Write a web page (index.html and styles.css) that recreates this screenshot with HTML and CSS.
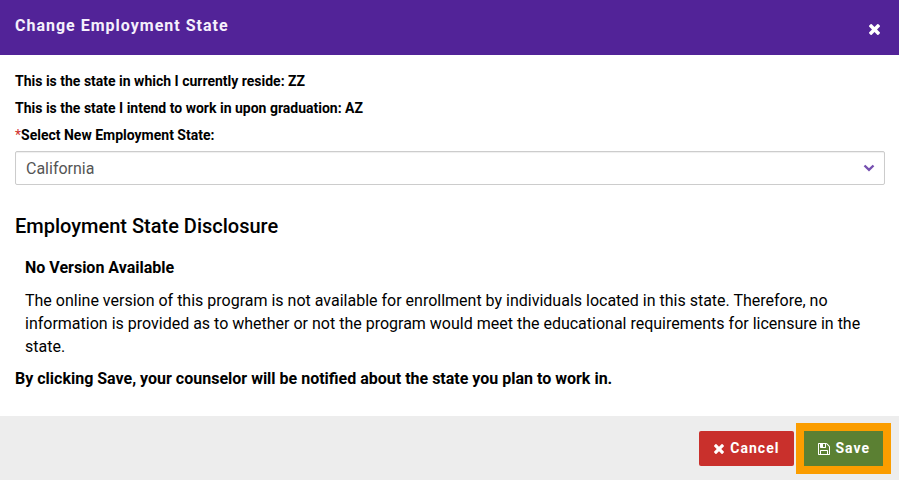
FILE: index.html
```html
<!DOCTYPE html>
<html lang="en">
<head>
<meta charset="utf-8">
<title>Change Employment State</title>
<link rel="stylesheet" href="styles.css">
</head>
<body>
<form class="modal">
  <header class="modal-header">
    <h1 class="modal-title">Change Employment State</h1>
    <button type="button" class="close" aria-label="Close">
      <svg class="icon-close" viewBox="302 366 1188 1188" aria-hidden="true"><path fill="currentColor" d="M1490 1322q0 40-28 68l-136 136q-28 28-68 28t-68-28l-294-294-294 294q-28 28-68 28t-68-28l-136-136q-28-28-28-68t28-68l294-294-294-294q-28-28-28-68t28-68l136-136q28-28 68-28t68 28l294 294 294-294q28-28 68-28t68 28l136 136q28 28 28 68t-28 68l-294 294 294 294q28 28 28 68z"/></svg>
    </button>
  </header>
  <main class="modal-body">
    <p class="fact">This is the state in which I currently reside: ZZ</p>
    <p class="fact">This is the state I intend to work in upon graduation: AZ</p>
    <label class="fact" for="state"><span class="required">*</span>Select New Employment State:</label>
    <div class="select-wrap">
      <select id="state" class="select"><option>California</option></select>
      <svg class="chevron" viewBox="0 0 12 8" aria-hidden="true"><path d="M1.500 1.500L6 5.800L10.500 1.500" fill="none" stroke="currentColor" stroke-width="2.400"/></svg>
    </div>
    <h2 class="heading">Employment State Disclosure</h2>
    <section class="disclosure">
      <h3 class="subheading">No Version Available</h3>
      <p class="text">The online version of this program is not available for enrollment by individuals located in this state. Therefore, no information is provided as to whether or not the program would meet the educational requirements for licensure in the state.</p>
    </section>
    <p class="notice">By clicking Save, your counselor will be notified about the state you plan to work in.</p>
  </main>
  <footer class="modal-footer">
    <button type="button" class="btn cancel">
      <svg class="icon-cancel" viewBox="302 366 1188 1188" aria-hidden="true"><path fill="currentColor" d="M1490 1322q0 40-28 68l-136 136q-28 28-68 28t-68-28l-294-294-294 294q-28 28-68 28t-68-28l-136-136q-28-28-28-68t28-68l294-294-294-294q-28-28-28-68t28-68l136-136q28-28 68-28t68 28l294 294 294-294q28-28 68-28t68 28l136 136q28 28 28 68t-28 68l-294 294 294 294q28 28 28 68z"/></svg>
      Cancel
    </button>
    <button type="submit" class="btn save">
      <svg class="icon-save" viewBox="128 128 1536 1536" aria-hidden="true"><path fill="currentColor" d="M512 1536h768v-384h-768v384zm896 0h128v-896q0-14-10-38.500t-20-34.500l-281-281q-10-10-34-20t-39-10v416q0 40-28 68t-68 28h-576q-40 0-68-28t-28-68v-416h-128v1280h128v-416q0-40 28-68t68-28h832q40 0 68 28t28 68v416zm-384-928v-320q0-13-9.500-22.500t-22.500-9.500h-192q-13 0-22.500 9.500t-9.500 22.500v320q0 13 9.500 22.500t22.500 9.500h192q13 0 22.500-9.500t9.500-22.500zm640 32v928q0 40-28 68t-68 28h-1344q-40 0-68-28t-28-68v-1344q0-40 28-68t68-28h928q40 0 88 20t76 48l280 280q28 28 48 76t20 88z"/></svg>
      Save
    </button>
  </footer>
</form>
</body>
</html>
```
FILE: styles.css
```css
* {
  box-sizing: border-box;
}

body {
  margin: 0;
  background: #fff;
  color: #000;
  font: 16px/23px Roboto, sans-serif;
}

h1, h2, h3, p {
  margin: 0;
}

button, select {
  font: inherit;
}

.modal {
  display: flex;
  flex-direction: column;
  min-height: 100vh;
}

.modal-header {
  display: flex;
  align-items: flex-start;
  justify-content: space-between;
  padding: 14px 15px 16px;
  background: #522398;
  color: #f5f0fc;
}

.modal-title {
  font-size: 16px;
  line-height: 23px;
  font-weight: 700;
  letter-spacing: 1px;
}

.close {
  display: flex;
  margin: 6px 0 0;
  padding: 4px;
  border: 0;
  background: none;
  color: #fff;
}

.icon-close {
  width: 11px;
  height: 11px;
}

.modal-body {
  flex: 1;
  padding: 16px 14px 0 15px;
}

.fact {
  display: block;
  margin-bottom: 7px;
  font-size: 14px;
  line-height: 20px;
  font-weight: 700;
}

label.fact {
  margin-bottom: 6px;
}

.required {
  color: #d0312d;
  font-weight: 400;
}

.select-wrap {
  display: grid;
  align-items: center;
  margin-bottom: 28px;
}

.select {
  grid-area: 1 / 1;
  width: 100%;
  height: 34px;
  padding: 0 32px 0 10px;
  border: 1px solid #ccc;
  border-radius: 2px;
  box-shadow: inset 0 1px 1px #0001;
  background: #fff;
  color: #555;
  appearance: none;
}

.chevron {
  grid-area: 1 / 1;
  justify-self: end;
  width: 12px;
  height: 8px;
  margin-right: 10px;
  color: #7650b0;
  pointer-events: none;
}

.heading {
  margin-bottom: 17px;
  font-size: 20px;
  line-height: 26px;
  font-weight: 500;
}

.disclosure {
  padding: 0 10px;
}

.subheading {
  margin-bottom: 10px;
  font-size: 16px;
  line-height: 23px;
  font-weight: 700;
}

.text {
  margin-bottom: 9px;
}

.notice {
  font-weight: 700;
}

.modal-footer {
  display: flex;
  justify-content: flex-end;
  gap: 10px;
  padding: 15px 16px 14px;
  background: #ededed;
}

.btn {
  display: flex;
  align-items: center;
  gap: 6px;
  height: 35px;
  padding: 0 15px;
  border: 0;
  border-radius: 2px;
  color: #fff;
  font-size: 14px;
  font-weight: 700;
  letter-spacing: 1px;
}

.cancel {
  background: #c9302c;
}

.save {
  gap: 5px;
  padding: 0 13px 0 14px;
  border-radius: 0;
  background: #5b8033;
  box-shadow: 0 0 0 8px #fb9d00;
}

.icon-cancel {
  width: 10px;
  height: 10px;
}

.icon-save {
  width: 12px;
  height: 12px;
}
```
